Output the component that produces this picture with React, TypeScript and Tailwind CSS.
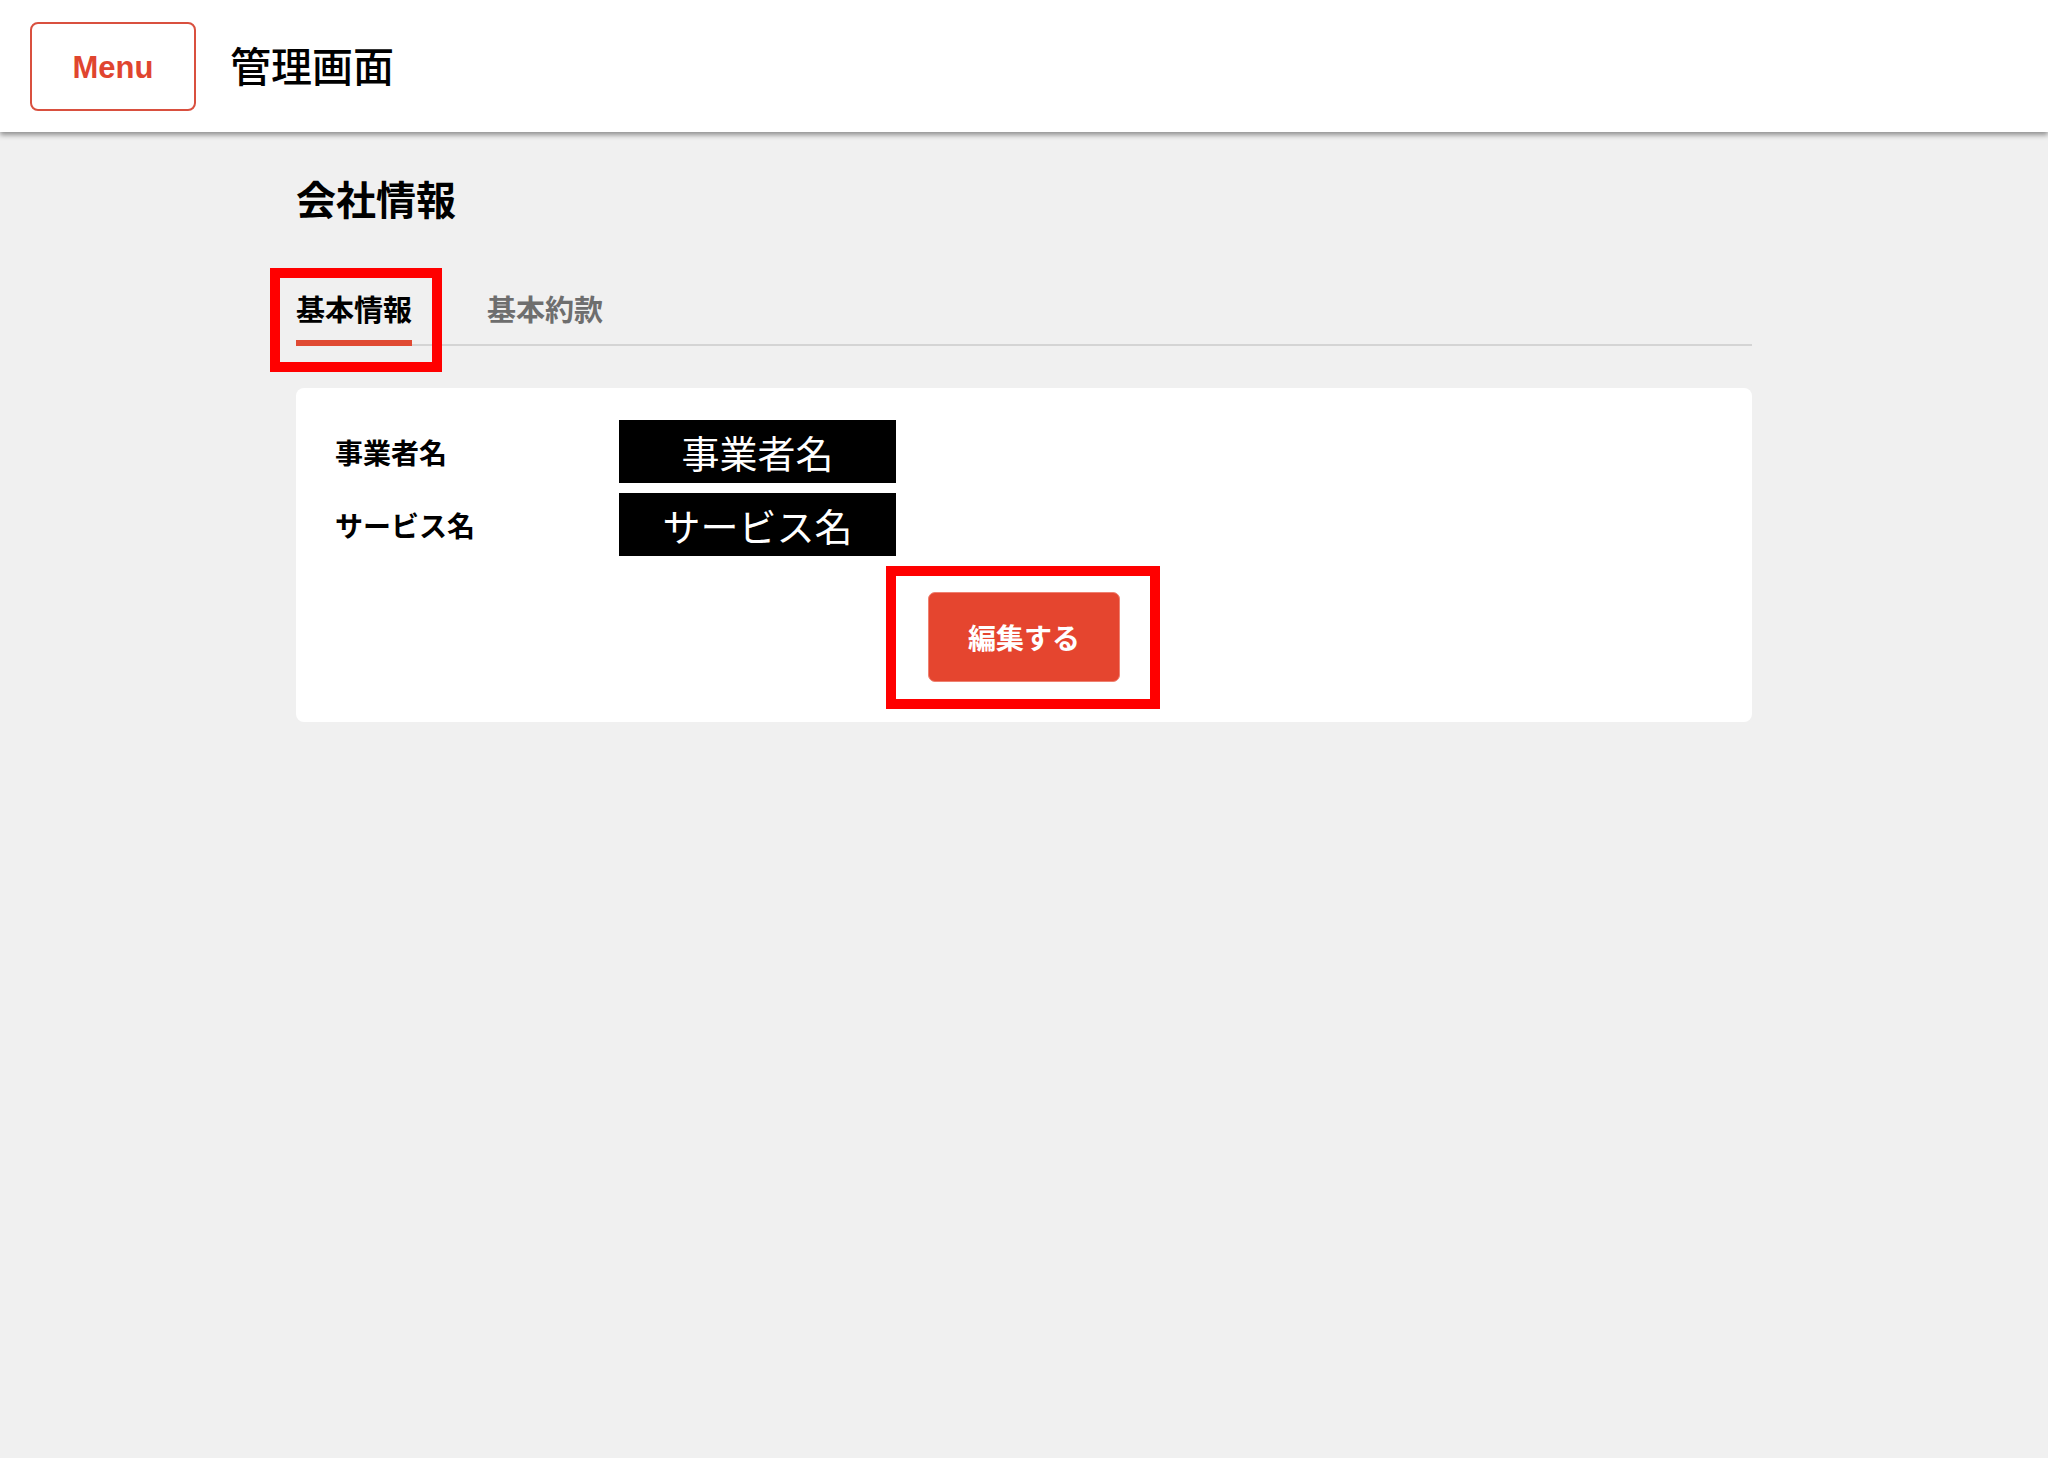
import React, { useState } from 'react'

const jp = "font-['Noto_Sans_CJK_JP','Noto_Sans',sans-serif]"

interface Field {
  label: string
  value: string
}

const fields: Field[] = [
  { label: '事業者名', value: '事業者名' },
  { label: 'サービス名', value: 'サービス名' }
]

export default function App() {
  const [tab, setTab] = useState<'basic' | 'terms'>('basic')

  return (
    <div className={`relative min-h-screen bg-[#f0f0f0] ${jp}`}>
      {/* Header */}
      <header className="h-[132px] bg-white flex items-center pl-[30px] gap-[34px] shadow-[0_3px_5px_rgba(0,0,0,0.4)] relative z-10">
        <button className="w-[166px] h-[89px] rounded-[8px] border-2 border-[#d9503f] text-[#e0452f] text-[31px] font-bold font-['Liberation_Sans',sans-serif] flex items-center justify-center pt-[5px]">
          Menu
        </button>
        <h1 className="text-[41px] leading-none text-black font-medium -mt-[4px]">管理画面</h1>
      </header>

      {/* Main */}
      <main className="w-[1456px] mx-auto pt-[46px]">
        <h2 className="text-[40px] leading-none font-bold text-black">会社情報</h2>

        <div className="mt-[76px] flex gap-[75px] border-b-2 border-[#d4d4d4]">
          <button
            onClick={() => setTab('basic')}
            className={`text-[29px] leading-none font-bold pb-[17px] border-b-[6px] -mb-[2px] ${
              tab === 'basic' ? 'text-black border-[#e04a33]' : 'text-[#6e6e6e] border-transparent'
            }`}
          >
            基本情報
          </button>
          <button
            onClick={() => setTab('terms')}
            className={`text-[29px] leading-none font-bold pb-[17px] border-b-[6px] -mb-[2px] ${
              tab === 'terms' ? 'text-black border-[#e04a33]' : 'text-[#6e6e6e] border-transparent'
            }`}
          >
            基本約款
          </button>
        </div>

        <div className="mt-[42px] bg-white rounded-[8px] pt-[32px] pb-[40px] px-[39px]">
          <div className="flex flex-col gap-[10px]">
            {fields.map(f => (
              <div key={f.label} className="flex items-center">
                <div className="w-[284px] text-[28px] font-bold text-black leading-none">{f.label}</div>
                <div className="w-[277px] h-[63px] bg-black text-white text-[38px] flex items-center justify-center leading-none">
                  {f.value}
                </div>
              </div>
            ))}
          </div>
          <div className="mt-[36px] flex justify-center">
            <button className="w-[192px] h-[90px] rounded-[7px] bg-[#e5452f] border border-[#ef8070] text-white text-[28px] font-bold">
              編集する
            </button>
          </div>
        </div>
      </main>

      {/* Annotation boxes */}
      <div className="absolute left-[270px] top-[268px] w-[172px] h-[104px] border-[10px] border-[#ff0000] pointer-events-none" />
      <div className="absolute left-[886px] top-[566px] w-[274px] h-[143px] border-[10px] border-[#ff0000] pointer-events-none" />
    </div>
  )
}
